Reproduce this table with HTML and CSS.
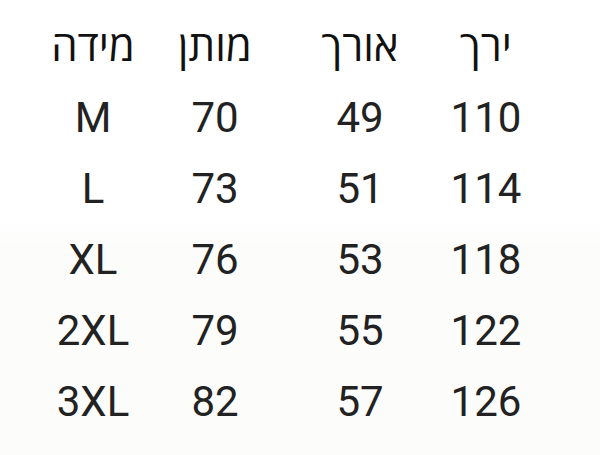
FILE: index.html
```html
<!DOCTYPE html>
<html lang="he">
<head>
<meta charset="utf-8">
<title>טבלת מידות</title>
<link rel="stylesheet" href="styles.css">
</head>
<body>
<div class="chart">
  <div class="cell head" dir="rtl">מידה</div>
  <div class="cell head" dir="rtl">מותן</div>
  <div class="cell head" dir="rtl">אורך</div>
  <div class="cell head" dir="rtl">ירך</div>

  <div class="cell size">M</div><div class="cell">70</div><div class="cell">49</div><div class="cell">110</div>
  <div class="cell size">L</div><div class="cell">73</div><div class="cell">51</div><div class="cell">114</div>
  <div class="cell size">XL</div><div class="cell">76</div><div class="cell">53</div><div class="cell">118</div>
  <div class="cell size">2XL</div><div class="cell">79</div><div class="cell">55</div><div class="cell">122</div>
  <div class="cell size">3XL</div><div class="cell">82</div><div class="cell">57</div><div class="cell">126</div>
</div>
</body>
</html>
```
FILE: styles.css
```css
html, body {
  margin: 0;
  padding: 0;
  background: #ffffff;
}
body {
  width: 600px;
  height: 455px;
  overflow: hidden;
  background: linear-gradient(#ffffff 0, #ffffff 220px, #fcfcfb 250px, #fcfcfb 455px);
}
.chart {
  display: grid;
  grid-template-columns: 120px 124px 166px 86px;
  grid-auto-rows: 71px;
  padding: 11px 0 0 33px;
  font-family: "Roboto", "Open Sans", "Liberation Sans", sans-serif;
  font-size: 42px;
  color: #222222;
}
.cell {
  line-height: 71px;
  height: 71px;
  text-align: center;
  white-space: nowrap;
}
.head {
  color: #111111;
  font-weight: 500;
}
```
